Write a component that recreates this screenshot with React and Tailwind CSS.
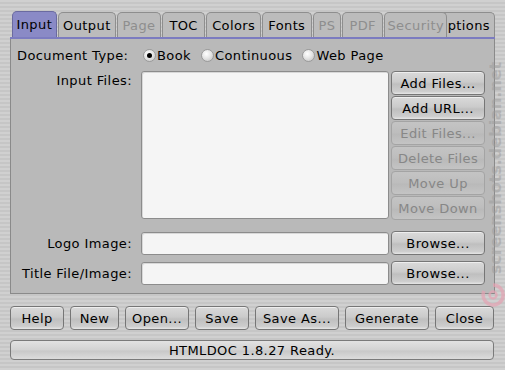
import React from "react";

const font = "font-['DejaVu_Sans',Verdana,sans-serif] tracking-[0.4px]";

const btn =
  "flex items-center justify-center border border-[#767676] rounded-[4px] bg-[linear-gradient(to_bottom,#dadada,#cbcbcb_45%,#bfbfbf_55%,#cdcdcd_88%,#e6e6e6)] shadow-[inset_0_1px_0_#eeeeee] text-[13px] text-black leading-none";
const btnDis =
  "flex items-center justify-center border border-[#a4a4a4] rounded-[4px] bg-[linear-gradient(to_bottom,#c4c4c4,#bdbdbd_50%,#b9b9b9_55%,#c4c4c4)] text-[13px] text-[#878787] leading-none";
const field =
  "border border-[#8c8c8c] rounded-[3px] bg-[#f5f5f5] shadow-[inset_1px_1px_0_#d8d8d8]";

function Tab({ label, w, active, disabled, extra = "" }) {
  return (
    <div
      className={`${w} flex items-center justify-center rounded-t-[5px] border border-b-0 text-[13px] leading-none ${
        active
          ? "h-[26px] bg-[#8a8ac6] border-[#6a6aa0] text-black"
          : "h-[25px] bg-[#bcbcbc] border-[#8e8e8e] " + (disabled ? "text-[#8e8e8e]" : "text-black")
      } ${extra}`}
    >
      {label}
    </div>
  );
}

function Radio({ checked, label }) {
  return (
    <div className="flex items-center gap-[1px]">
      <div className="w-[13px] h-[13px] rounded-full border border-[#9a9a9a] bg-[radial-gradient(circle_at_40%_35%,#ffffff,#e6e6e6_45%,#bdbdbd)] flex items-center justify-center">
        {checked && <div className="w-[5px] h-[5px] rounded-full bg-black" />}
      </div>
      <span>{label}</span>
    </div>
  );
}

export default function App() {
  return (
    <div
      className={`${font} relative w-[505px] h-[370px] overflow-hidden pt-[11px] px-[10px] bg-[repeating-linear-gradient(to_bottom,#d0d0d0_0px,#d0d0d0_2px,#c6c6c6_2px,#c6c6c6_4px)] text-black`}
    >
      {/* Tabs */}
      <div className="flex items-end h-[26px] pl-[2px] gap-[1px]">
        <Tab label="Input" w="w-[45px]" active />
        <Tab label="Output" w="w-[59px]" />
        <Tab label="Page" w="w-[44px]" disabled />
        <Tab label="TOC" w="w-[44px]" />
        <Tab label="Colors" w="w-[55px]" />
        <Tab label="Fonts" w="w-[50px]" />
        <Tab label="PS" w="w-[29px]" disabled />
        <Tab label="PDF" w="w-[41px]" disabled />
        <Tab label="Security" w="w-[64px]" disabled extra="relative z-10" />
        <div className="relative -ml-[14px] w-[61px] h-[25px] flex items-center justify-end pr-[4px] rounded-t-[5px] border border-b-0 border-[#8e8e8e] bg-[#bcbcbc] text-[13px] leading-none">
          Options
        </div>
      </div>

      {/* Panel */}
      <div className="h-[257px] w-[485px] border border-[#8a8a8a] border-t-0 bg-[#b9b9b9] text-[13px]">
        <div className="h-[2px] bg-[#7c7cc0] -mx-[1px]" />
        {/* Document type */}
        <div className="flex items-center h-[16px] mt-[8px] pl-[6px] leading-none">
          <div className="w-[126px]">Document Type:</div>
          <div className="flex items-center gap-[10px]">
            <Radio checked label="Book" />
            <Radio label="Continuous" />
            <Radio label="Web Page" />
          </div>
        </div>

        {/* Input files */}
        <div className="flex mt-[8px] h-[150px]">
          <div className="w-[121px] text-right pt-[2px] leading-[16px]">Input Files:</div>
          <div className={`${field} ml-[9px] w-[248px] h-[148px]`} />
          <div className="ml-[2px] w-[94px] flex flex-col">
            <div className={`${btn} h-[24px] mb-[1px]`}>Add Files...</div>
            <div className={`${btn} h-[24px] mb-[1px]`}>Add URL...</div>
            <div className={`${btnDis} h-[24px] mb-[1px]`}>Edit Files...</div>
            <div className={`${btnDis} h-[24px] mb-[1px]`}>Delete Files</div>
            <div className={`${btnDis} h-[24px] mb-[1px]`}>Move Up</div>
            <div className={`${btnDis} h-[24px]`}>Move Down</div>
          </div>
        </div>

        {/* Logo image */}
        <div className="flex items-center mt-[10px] h-[24px]">
          <div className="w-[121px] text-right leading-none">Logo Image:</div>
          <div className={`${field} ml-[9px] w-[248px] h-[23px]`} />
          <div className={`${btn} ml-[2px] w-[94px] h-[24px]`}>Browse...</div>
        </div>
        <div className="flex items-center mt-[6px] h-[24px]">
          <div className="w-[121px] text-right leading-none">Title File/Image:</div>
          <div className={`${field} ml-[9px] w-[248px] h-[23px]`} />
          <div className={`${btn} ml-[2px] w-[94px] h-[24px]`}>Browse...</div>
        </div>
      </div>

      {/* Bottom buttons */}
      <div className="flex mt-[12px] h-[24px] gap-[6px]">
        <div className={`${btn} w-[54px]`}>Help</div>
        <div className={`${btn} w-[49px]`}>New</div>
        <div className={`${btn} w-[64px]`}>Open...</div>
        <div className={`${btn} w-[54px]`}>Save</div>
        <div className={`${btn} w-[84px]`}>Save As...</div>
        <div className={`${btn} w-[84px]`}>Generate</div>
        <div className={`${btn} w-[59px]`}>Close</div>
      </div>

      {/* Status */}
      <div className="mt-[10px] w-[484px] h-[20px] flex items-center justify-center border border-[#7a7a7a] rounded-[4px] bg-[linear-gradient(to_bottom,#e2e2e2,#d2d2d2_50%,#c8c8c8_55%,#dcdcdc)] text-[13px] leading-none">
        HTMLDOC 1.8.27 Ready.
      </div>

      {/* Watermark */}
      <div className="absolute left-[496px] top-[168px] -translate-x-1/2 -translate-y-1/2 -rotate-90 whitespace-nowrap text-[16px] font-bold tracking-normal text-[#9a9a9a]/50 leading-none">
        screenshots.debian.net
      </div>
      <svg className="absolute left-[480px] top-[282px]" width="26" height="26" viewBox="0 0 26 26">
        <path d="M13 3 A10 10 0 1 1 4 9" fill="none" stroke="#e4a2b2" strokeWidth="3.5" opacity="0.7" />
        <circle cx="13" cy="13" r="3.5" fill="none" stroke="#e4a2b2" strokeWidth="2.5" opacity="0.7" />
      </svg>
    </div>
  );
}
